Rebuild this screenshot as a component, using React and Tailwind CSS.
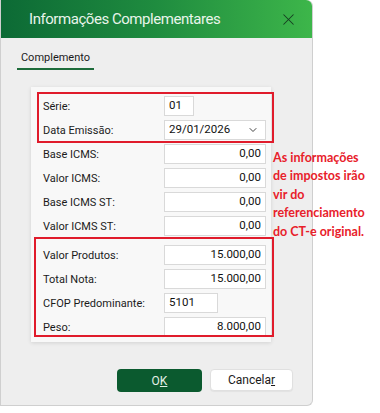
import { ChevronDown, X } from 'lucide-react'

const font = { fontFamily: 'Roboto, "Noto Sans", sans-serif' }

function Field({ label, value, width = 'w-[102px]', align = 'text-right', chevron }) {
  return (
    <div className="flex items-center h-5">
      <span className="w-[121px] text-[11px] text-[#1b1b1b] leading-none">{label}</span>
      <div
        className={`${width} h-5 bg-white border border-[#d9d9d9] flex items-center px-1 text-[11.5px] text-[#111] ${align}`}
      >
        <span className="flex-1 leading-none">{value}</span>
        {chevron && <ChevronDown className="w-3 h-3 mr-0.5 text-[#444]" strokeWidth={2} />}
      </div>
    </div>
  )
}

export default function App() {
  return (
    <div className="relative w-[380px] h-[413px] bg-white overflow-hidden" style={font}>
      {/* Dialog */}
      <div className="w-[313px] h-[406px] bg-[#eeeeee] rounded-r-[6px] border-r border-b border-l border-[#cfcfcf] flex flex-col">
        {/* Title bar */}
        <div className="h-[38px] rounded-tr-[6px] bg-gradient-to-r from-[#0c6a35] via-[#1f8c3f] to-[#3db64a] flex items-center pl-[28px] pr-[14px]">
          <span className="flex-1 text-[15px] text-[#e8f4ea] tracking-[-0.45px]">Informações Complementares</span>
          <X className="w-[19px] h-[19px] text-[#173d22]" strokeWidth={1.3} />
        </div>

        {/* Tab */}
        <div className="pl-[16px] pt-[12px]">
          <div className="w-[77px] border-b-2 border-[#1d6b3a] pb-[3px] text-center text-[11px] text-[#1b1b1b] leading-[15px]">
            Complemento
          </div>
        </div>

        {/* Panel */}
        <div className="relative ml-[30px] mt-[17px] w-[240px] h-[255px] bg-[#f8f8f8] shadow-[0_1px_4px_rgba(0,0,0,0.12)]">
          <div className="pl-[12px] pt-[9px] flex flex-col gap-1">
            <Field label="Série:" value="01" width="w-[30px]" align="text-left" />
            <Field label="Data Emissão:" value="29/01/2026" align="text-left" chevron />
            <Field label="Base ICMS:" value="0,00" />
            <Field label="Valor ICMS:" value="0,00" />
            <Field label="Base ICMS ST:" value="0,00" />
            <Field label="Valor ICMS ST:" value="0,00" />
            <div className="h-px" />
            <Field label="Valor Produtos:" value="15.000,00" />
            <Field label="Total Nota:" value="15.000,00" />
            <Field label="CFOP Predominante:" value="5101" width="w-[54px]" align="text-left" />
            <Field label="Peso:" value="8.000,00" />
          </div>

          {/* Annotation boxes */}
          <div className="absolute left-[6px] top-[5px] w-[237px] h-[51px] border-2 border-[#e01b2b]" />
          <div className="absolute left-[3px] top-[150px] w-[240px] h-[100px] border-2 border-[#e01b2b]" />
        </div>

        {/* Buttons */}
        <div className="mt-auto mb-[13px] flex justify-end gap-2 pr-[19px]">
          <button className="w-[85px] h-[23px] rounded-[4px] bg-[#0b5a2f] text-[#e3f1e6] text-[12px]">
            O<span className="underline">K</span>
          </button>
          <button className="w-[83px] h-[22px] rounded-[4px] bg-white border border-[#e0e0e0] text-[#1b1b1b] text-[12px] shadow-[0_1px_1px_rgba(0,0,0,0.05)]">
            Cancela<span className="underline">r</span>
          </button>
        </div>
      </div>

      {/* Annotation text */}
      <div
        className="absolute left-[273px] top-[149px] text-[12.5px] leading-[18.4px] font-bold text-[#e8202a]"
        style={{ fontFamily: 'Lato, "Noto Sans", sans-serif' }}
      >
        As informações
        <br />
        de impostos irão
        <br />
        vir do
        <br />
        referenciamento
        <br />
        do CT-e original.
      </div>
    </div>
  )
}
